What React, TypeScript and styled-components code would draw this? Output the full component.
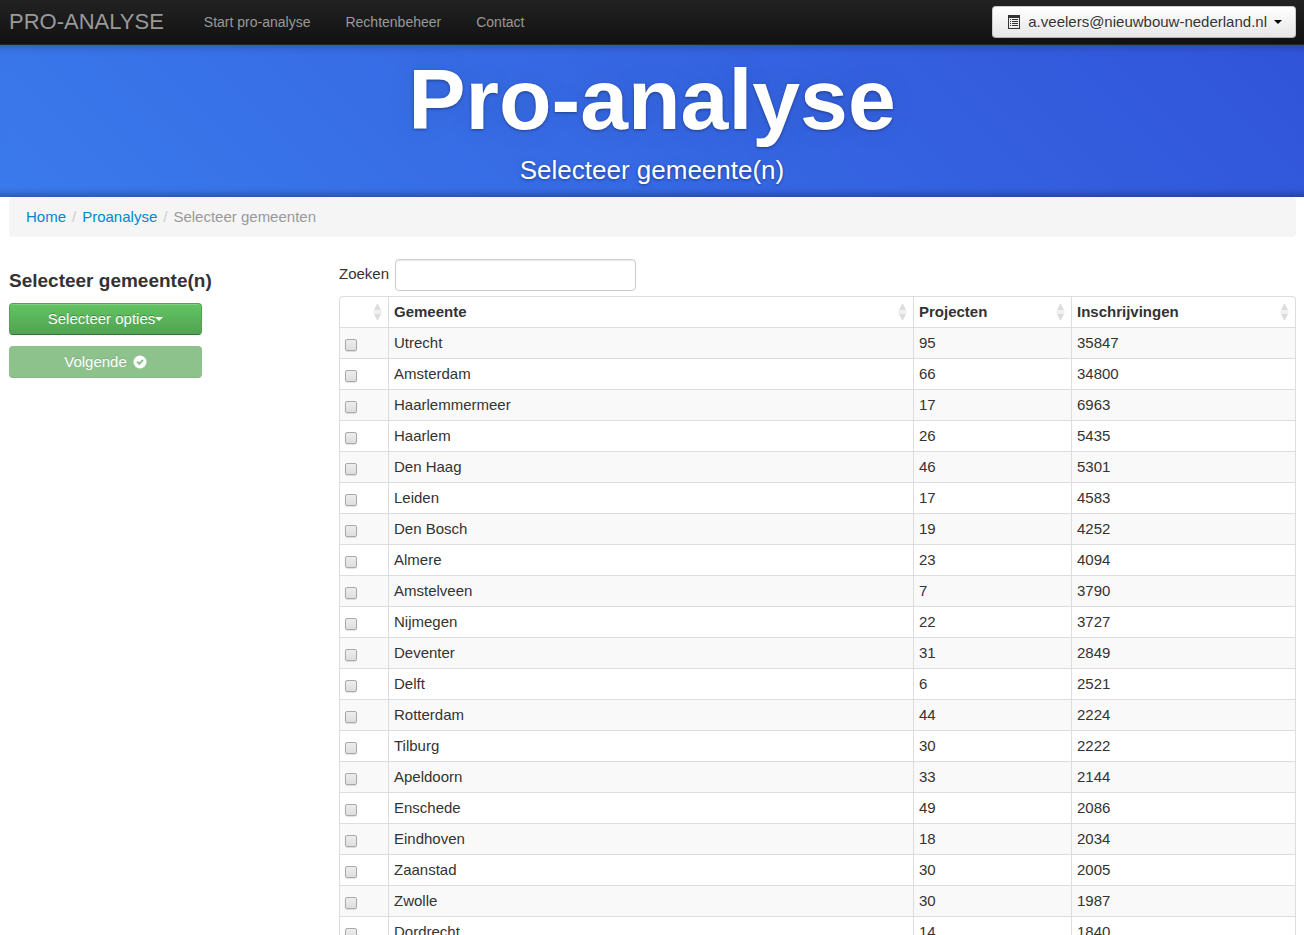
import { useState } from "react";
import styled, { createGlobalStyle } from "styled-components";

const GlobalStyle = createGlobalStyle`
  *, *::before, *::after { box-sizing: border-box; }
  body {
    margin: 0;
    background: #fff;
    color: #333;
    font-family: "Liberation Sans", Arial, Helvetica, sans-serif;
    font-size: 15px;
    line-height: 22px;
  }
  button, input { font: inherit; }
`;

const Navbar = styled.nav`
  display: flex;
  align-items: center;
  height: 45px;
  padding: 0 8px 0 9px;
  background: linear-gradient(#222, #111);
  border-bottom: 1px solid #252525;
`;

const Brand = styled.a`
  margin-right: 40px;
  color: #999;
  font-size: 22px;
  text-decoration: none;
`;

const NavList = styled.ul`
  display: flex;
  flex: 1;
  gap: 35px;
  margin: 0;
  padding: 0;
  list-style: none;
`;

const NavLink = styled.a`
  color: #999;
  font-size: 14px;
  text-decoration: none;
`;

const AccountButton = styled.button`
  display: flex;
  align-items: center;
  gap: 7px;
  height: 32px;
  padding: 0 13px 0 15px;
  border: 1px solid #bbb;
  border-color: #ccc #ccc #b3b3b3;
  border-radius: 4px;
  background: linear-gradient(#fff, #e6e6e6);
  box-shadow: inset 0 1px 0 rgba(255, 255, 255, 0.2);
  color: #333;
  text-shadow: 0 1px 1px rgba(255, 255, 255, 0.75);
`;

const Caret = styled.span<{ $color?: string }>`
  border-top: 4px solid ${(p) => p.$color ?? "#fff"};
  border-left: 4px solid transparent;
  border-right: 4px solid transparent;
`;

const Banner = styled.header`
  padding: 10px 9px;
  background: linear-gradient(45deg, #3a7aec, #3154d9);
  box-shadow: inset 0 10px 7px -7px rgba(0, 0, 0, 0.2), inset 0 -10px 7px -7px rgba(0, 0, 0, 0.3);
  color: #fff;
  text-align: center;
  text-shadow: 0 1px 3px rgba(0, 0, 0, 0.4), 0 0 30px rgba(0, 0, 0, 0.08);
`;

const BannerTitle = styled.h1`
  margin: 0;
  font-size: 86px;
  line-height: 88px;
`;

const BannerText = styled.p`
  margin: 10px 0 0;
  font-size: 26px;
  line-height: 34px;
`;

const Page = styled.main`
  padding: 0 8px 0 9px;
`;

const Breadcrumb = styled.ol`
  display: flex;
  margin: 0 0 22px;
  padding: 9px 17px;
  border-radius: 4px;
  background: #f5f5f5;
  color: #999;
  list-style: none;
`;

const Crumb = styled.li`
  & + &::before {
    content: "/";
    padding: 0 6px;
    color: #ccc;
  }
`;

const CrumbLink = styled.a`
  color: #08c;
  text-decoration: none;
`;

const Columns = styled.div`
  display: flex;
`;

const Sidebar = styled.aside`
  display: flex;
  flex: 0 0 330px;
  flex-direction: column;
  gap: 11px;
  padding-top: 11px;
`;

const SideTitle = styled.h2`
  margin: 0;
  font-size: 19px;
  line-height: 22px;
`;

const ActionButton = styled.button`
  display: flex;
  align-items: center;
  justify-content: center;
  gap: ${(p) => (p.disabled ? 6 : 0)}px;
  width: 193px;
  height: 32px;
  padding: 0;
  border: 1px solid;
  border-color: #51a351 #51a351 #387038;
  border-radius: 4px;
  background: linear-gradient(#62c462, #51a351);
  box-shadow: inset 0 1px 0 rgba(255, 255, 255, 0.2), 0 1px 2px rgba(0, 0, 0, 0.05);
  color: #fff;
  text-shadow: 0 -1px 0 rgba(0, 0, 0, 0.25);

  &:disabled {
    border-color: #51a351 #51a351 #489248;
    background: #51a351;
    box-shadow: none;
    opacity: 0.65;
  }
`;

const Results = styled.section`
  flex: 1;
  min-width: 0;
`;

const SearchRow = styled.div`
  display: flex;
  gap: 6px;
  margin-bottom: 5px;
  line-height: 30px;
`;

const SearchInput = styled.input`
  width: 241px;
  height: 32px;
  padding: 4px 6px;
  border: 1px solid #ccc;
  border-radius: 4px;
  box-shadow: inset 0 1px 1px rgba(0, 0, 0, 0.08);
`;

const Table = styled.table`
  width: 100%;
  border: 1px solid #ddd;
  border-left: 0;
  border-radius: 4px;
  border-collapse: separate;
  border-spacing: 0;
  table-layout: fixed;
`;

const HeadCell = styled.th<{ $width?: number }>`
  width: ${(p) => (p.$width ? `${p.$width}px` : "auto")};
  height: 30px;
  padding: 4px 5px;
  border-left: 1px solid #ddd;
  text-align: left;

  &:first-child { border-top-left-radius: 4px; }
`;

const HeadContent = styled.div`
  display: flex;
  align-items: center;
  justify-content: space-between;
`;

const Cell = styled.td`
  height: 31px;
  padding: 4px 5px;
  border-top: 1px solid #ddd;
  border-left: 1px solid #ddd;
`;

const Row = styled.tr`
  &:nth-child(odd) { background: #f9f9f9; }
`;

const Checkbox = styled.input`
  display: block;
  width: 12px;
  height: 12px;
  margin: 3px 0 0;
  appearance: none;
  border: 1px solid #a9a9a9;
  border-radius: 2px;
  background: linear-gradient(#ededed, #dedede);
  box-shadow: 0 1px 1px rgba(0, 0, 0, 0.12);

  &:checked { background: #2684dc; }
`;

const ListIcon = () => (
  <svg width="13" height="14" viewBox="0 0 13 14" aria-hidden="true">
    <path fill="#333" fillRule="evenodd" d="M0 0h12v14H0zM1 3v10h10V3z" />
    <path fill="#333" d="M2 4h1v1H2zM4 4h6v1H4zM2 6h1v1H2zM4 6h6v1H4zM2 8h1v1H2zM4 8h6v1H4zM2 10h1v1H2zM4 10h6v1H4z" />
  </svg>
);

const OkIcon = () => (
  <svg width="14" height="14" viewBox="0 0 14 14" aria-hidden="true">
    <circle cx="7" cy="7" r="6.5" fill="#fff" />
    <path d="M4 6.600l2.200 2.200L10 5" fill="none" stroke="#51a351" strokeWidth="2" />
  </svg>
);

const SortIcon = () => (
  <svg width="10" height="16" viewBox="0 0 10 16" aria-hidden="true">
    <path d="M4 0h1l3 6H1zM4 16h1l3-6H1z" fill="#dcdcdc" />
    <path d="M1 6h7l1 2-1 2H1L0 8z" fill="#f0f0f0" />
  </svg>
);

const gemeenten: [string, number, number][] = [
  ["Utrecht", 95, 35847],
  ["Amsterdam", 66, 34800],
  ["Haarlemmermeer", 17, 6963],
  ["Haarlem", 26, 5435],
  ["Den Haag", 46, 5301],
  ["Leiden", 17, 4583],
  ["Den Bosch", 19, 4252],
  ["Almere", 23, 4094],
  ["Amstelveen", 7, 3790],
  ["Nijmegen", 22, 3727],
  ["Deventer", 31, 2849],
  ["Delft", 6, 2521],
  ["Rotterdam", 44, 2224],
  ["Tilburg", 30, 2222],
  ["Apeldoorn", 33, 2144],
  ["Enschede", 49, 2086],
  ["Eindhoven", 18, 2034],
  ["Zaanstad", 30, 2005],
  ["Zwolle", 30, 1987],
  ["Dordrecht", 14, 1840],
];

const columns = [
  { label: "", width: 49 },
  { label: "Gemeente" },
  { label: "Projecten", width: 158 },
  { label: "Inschrijvingen", width: 224 },
];

export default function App() {
  const [query, setQuery] = useState("");
  const rows = gemeenten.filter(([naam]) => naam.toLowerCase().includes(query.toLowerCase()));

  return (
    <>
      <GlobalStyle />
      <Navbar>
        <Brand href="#">PRO-ANALYSE</Brand>
        <NavList>
          {["Start pro-analyse", "Rechtenbeheer", "Contact"].map((item) => (
            <li key={item}>
              <NavLink href="#">{item}</NavLink>
            </li>
          ))}
        </NavList>
        <AccountButton type="button">
          <ListIcon />
          a.veelers@nieuwbouw-nederland.nl
          <Caret $color="#000" />
        </AccountButton>
      </Navbar>
      <Banner>
        <BannerTitle>Pro-analyse</BannerTitle>
        <BannerText>Selecteer gemeente(n)</BannerText>
      </Banner>
      <Page>
        <Breadcrumb>
          <Crumb><CrumbLink href="#">Home</CrumbLink></Crumb>
          <Crumb><CrumbLink href="#">Proanalyse</CrumbLink></Crumb>
          <Crumb>Selecteer gemeenten</Crumb>
        </Breadcrumb>
        <Columns>
          <Sidebar>
            <SideTitle>Selecteer gemeente(n)</SideTitle>
            <ActionButton type="button">Selecteer opties<Caret /></ActionButton>
            <ActionButton type="button" disabled>Volgende<OkIcon /></ActionButton>
          </Sidebar>
          <Results>
            <SearchRow>
              <label htmlFor="zoeken">Zoeken</label>
              <SearchInput id="zoeken" type="text" value={query} onChange={(e) => setQuery(e.target.value)} />
            </SearchRow>
            <Table>
              <thead>
                <tr>
                  {columns.map((c) => (
                    <HeadCell key={c.label} $width={c.width}>
                      <HeadContent><span>{c.label}</span><SortIcon /></HeadContent>
                    </HeadCell>
                  ))}
                </tr>
              </thead>
              <tbody>
                {rows.map(([naam, projecten, inschrijvingen]) => (
                  <Row key={naam}>
                    <Cell><Checkbox type="checkbox" aria-label={naam} /></Cell>
                    <Cell>{naam}</Cell>
                    <Cell>{projecten}</Cell>
                    <Cell>{inschrijvingen}</Cell>
                  </Row>
                ))}
              </tbody>
            </Table>
          </Results>
        </Columns>
      </Page>
    </>
  );
}
